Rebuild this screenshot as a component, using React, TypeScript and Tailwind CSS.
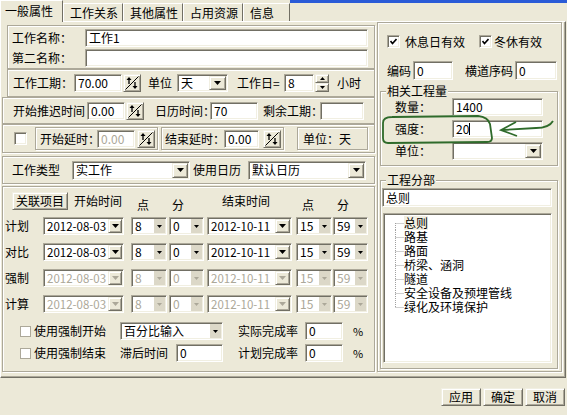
import React from "react";

const sunk =
  "border border-t-[#aca899] border-l-[#aca899] border-b-white border-r-white shadow-[inset_1px_1px_0_#716f64,inset_-1px_-1px_0_#f1efe2]";
const rais =
  "border border-t-[#f1efe2] border-l-[#f1efe2] border-b-[#716f64] border-r-[#716f64] shadow-[inset_1px_1px_0_#fff,inset_-1px_-1px_0_#aca899]";
const etch = "border border-[#aca899] shadow-[inset_1px_1px_0_#fff,1px_1px_0_#fff]";

function L({ cls = "", children }: { cls?: string; children: React.ReactNode }) {
  return <span className={`${cls} shrink-0 whitespace-nowrap leading-[14px]`}>{children}</span>;
}

function Edit({
  w,
  h = "h-[18px]",
  v = "",
  dis = false,
  caret = false,
}: {
  w: string;
  h?: string;
  v?: string;
  dis?: boolean;
  caret?: boolean;
}) {
  return (
    <div
      className={`${w} ${h} shrink-0 bg-white ${sunk} flex items-center pl-[3px] leading-[14px] whitespace-nowrap ${
        dis ? "text-[#aca899]" : ""
      }`}
    >
      {v}
      {caret && <span className="w-px h-[12px] bg-black" />}
    </div>
  );
}

function Tri({ dis = false, small = false }: { dis?: boolean; small?: boolean }) {
  const c = dis ? "#aca899" : "#000";
  return small ? (
    <svg width="5" height="3" viewBox="0 0 5 3">
      <polygon points="0,0 5,0 2.5,3" fill={c} />
    </svg>
  ) : (
    <svg width="7" height="4" viewBox="0 0 7 4">
      <polygon points="0,0 7,0 3.5,4" fill={c} />
    </svg>
  );
}

function Combo({
  w,
  v = "",
  dis = false,
  flat = false,
  h = "h-[18px]",
  bw = "w-[16px]",
  txt = "",
}: {
  w: string;
  v?: string;
  dis?: boolean;
  flat?: boolean;
  h?: string;
  bw?: string;
  txt?: string;
}) {
  return (
    <div className={`${w} ${h} shrink-0 bg-white ${sunk} flex p-px`}>
      <div
        className={`flex-1 min-w-0 flex items-center pl-[2px] leading-[14px] whitespace-nowrap ${txt} ${
          dis ? "text-[#aca899]" : ""
        }`}
      >
        {v}
      </div>
      {flat ? (
        <div className="w-[12px] shrink-0 bg-[#dcd8c8] border-l border-white flex items-center justify-center">
          <Tri small dis={dis} />
        </div>
      ) : (
        <div className={`${bw} shrink-0 ${rais} bg-[#ece9d8] flex items-center justify-center`}>
          <Tri dis={dis} />
        </div>
      )}
    </div>
  );
}

function Spin({ cls = "" }: { cls?: string }) {
  return (
    <div className={`${cls} w-[18px] h-[18px] shrink-0 ${rais} bg-[#ece9d8] flex items-center justify-center`}>
      <svg width="14" height="14" viewBox="0 0 14 14">
        <line x1="0.5" y1="13.5" x2="13.5" y2="0.5" stroke="#000" />
        <line x1="4" y1="3" x2="4" y2="8" stroke="#000" strokeWidth="1.3" />
        <polygon points="1.5,4 4,1 6.5,4" fill="#000" />
        <line x1="10" y1="6" x2="10" y2="11" stroke="#000" strokeWidth="1.3" />
        <polygon points="7.5,10 10,13 12.5,10" fill="#000" />
      </svg>
    </div>
  );
}

function UpDown({ cls = "" }: { cls?: string }) {
  return (
    <div className={`${cls} w-[14px] h-[18px] shrink-0 flex flex-col`}>
      <div className={`h-[9px] ${rais} bg-[#ece9d8] flex items-center justify-center`}>
        <svg width="5" height="3" viewBox="0 0 5 3">
          <polygon points="0,3 5,3 2.5,0" fill="#000" />
        </svg>
      </div>
      <div className={`h-[9px] ${rais} bg-[#ece9d8] flex items-center justify-center`}>
        <Tri small />
      </div>
    </div>
  );
}

function Check({ on = false, flat = false, cls = "" }: { on?: boolean; flat?: boolean; cls?: string }) {
  return (
    <div
      className={`${cls} ${flat ? "w-[11px] h-[11px] border border-[#aca899]" : `w-[13px] h-[13px] ${sunk}`} shrink-0 bg-white flex items-center justify-center`}
    >
      {on && (
        <svg width="7" height="7" viewBox="0 0 7 7">
          <polyline points="0.5,3 2.5,5.5 6.5,1" fill="none" stroke="#000" strokeWidth="1.6" />
        </svg>
      )}
    </div>
  );
}

function Btn({ cls, children }: { cls: string; children: React.ReactNode }) {
  return (
    <div className={`${cls} h-[18px] shrink-0 ${rais} bg-[#ece9d8] flex items-center justify-center leading-[14px]`}>
      {children}
    </div>
  );
}

function Group({ cls, title, children }: { cls: string; title: string; children: React.ReactNode }) {
  return (
    <div className={`${cls} ${etch} relative shrink-0 flex flex-col`}>
      <span className="absolute left-[5px] -top-[8px] px-px bg-[#ece9d8] leading-[14px]">{title}</span>
      {children}
    </div>
  );
}

const tree = ["总则", "路基", "路面", "桥梁、涵洞", "隧道", "安全设备及预埋管线", "绿化及环境保护"];

function DateRow({ label, dis = false }: { label: string; dis?: boolean }) {
  return (
    <div className="flex items-center h-[18px]">
      <L cls="ml-[2px] w-[24px]">{label}</L>
      <Combo w="ml-[14px] w-[81px]" v="2012-08-03" dis={dis} bw="w-[14px]" txt="text-[11.5px]" />
      <Combo w="ml-[7px] w-[36px]" v="8" dis={dis} flat />
      <Combo w="ml-[2px] w-[35px]" v="0" dis={dis} flat />
      <Combo w="ml-[3px] w-[85px]" v="2012-10-11" dis={dis} bw="w-[15px]" txt="text-[11.5px]" />
      <Combo w="ml-[4px] w-[36px]" v="15" dis={dis} flat />
      <Combo w="ml-[1px] w-[35px]" v="59" dis={dis} flat />
    </div>
  );
}

export default function App() {
  return (
    <div className="w-[567px] h-[415px] bg-[#ece9d8] overflow-hidden relative font-['Noto_Sans_CJK_SC',sans-serif] text-[12px] text-black leading-[14px]">
      {/* tabs */}
      <div className="flex h-[21px]">
        <div className="w-[63px] h-[22px] relative z-10 bg-[#ece9d8] border-t border-l border-r border-t-white border-l-white border-r-[#716f64] pl-[4px] pt-[3px]">
          一般属性
        </div>
        <div className="w-[60px] h-[18px] mt-[3px] border-t border-l border-r border-t-white border-l-white border-r-[#716f64] pl-[6px] pt-[2px]">
          工作关系
        </div>
        <div className="w-[60px] h-[18px] mt-[3px] border-t border-l border-r border-t-white border-l-white border-r-[#716f64] pl-[6px] pt-[2px]">
          其他属性
        </div>
        <div className="w-[60px] h-[18px] mt-[3px] border-t border-l border-r border-t-white border-l-white border-r-[#716f64] pl-[6px] pt-[2px]">
          占用资源
        </div>
        <div className="w-[47px] h-[18px] mt-[3px] border-t border-l border-r border-t-white border-l-white border-r-[#716f64] pl-[6px] pt-[2px]">
          信息
        </div>
        <div className="flex-1">
          <div className="h-[3px] bg-[#2a5bd7]" />
        </div>
      </div>

      {/* page */}
      <div className="w-[566px] h-[357px] border border-t-white border-l-white border-r-[#716f64] border-b-[#716f64] shadow-[inset_-1px_-1px_0_#aca899] flex pl-px">
        {/* left column */}
        <div className="w-[373px] mt-[3px] flex flex-col shrink-0">
          {/* A */}
          <div className={`ml-[5px] w-[368px] h-[44px] ${etch} flex flex-col pt-[3px] gap-[2px]`}>
            <div className="flex items-center h-[18px]">
              <L cls="ml-[4px] w-[73px]">工作名称：</L>
              <Edit w="w-[283px]" v="工作1" />
            </div>
            <div className="flex items-center h-[18px]">
              <L cls="ml-[4px] w-[73px]">第二名称：</L>
              <Edit w="w-[283px]" />
            </div>
          </div>
          {/* B */}
          <div className={`ml-[5px] w-[368px] h-[28px] ${etch} flex items-center`}>
            <L cls="ml-[5px] w-[61px]">工作工期：</L>
            <Edit w="w-[48px]" v="70.00" />
            <Spin cls="ml-[1px]" />
            <L cls="ml-[7px] w-[24px]">单位</L>
            <Combo w="ml-[5px] w-[51px]" v="天" bw="w-[17px]" />
            <L cls="ml-[9px] w-[46px]">工作日=</L>
            <Edit w="ml-[1px] w-[30px]" v="8" />
            <UpDown cls="ml-[1px]" />
            <L cls="ml-[8px]">小时</L>
          </div>
          {/* C */}
          <div className={`w-[373px] h-[27px] ${etch} flex items-center`}>
            <L cls="ml-[10px] w-[72px]">开始推迟时间</L>
            <Edit w="ml-[2px] w-[38px]" v="0.00" />
            <Spin cls="ml-[1px]" />
            <L cls="ml-[11px] w-[55px]">日历时间：</L>
            <Edit w="w-[48px]" v="70" />
            <L cls="ml-[5px] w-[57px]">剩余工期：</L>
            <Edit w="w-[44px]" />
          </div>
          {/* D */}
          <div className={`w-[373px] h-[29px] ${etch} flex items-center`}>
            <Check cls="ml-[11px]" />
            <div className={`ml-[8px] w-[123px] h-[23px] ${etch} flex items-center`}>
              <L cls="ml-[4px] w-[57px]">开始延时：</L>
              <Edit w="w-[38px]" v="0.00" dis />
              <Spin cls="ml-[2px]" />
            </div>
            <div className={`ml-[3px] w-[123px] h-[23px] ${etch} flex items-center`}>
              <L cls="ml-[3px] w-[59px]">结束延时：</L>
              <Edit w="w-[35px]" v="0.00" />
              <Spin cls="ml-[4px]" />
            </div>
            <div className={`ml-[13px] w-[71px] h-[23px] ${etch} flex items-center`}>
              <L cls="ml-[5px]">单位：天</L>
            </div>
          </div>
          {/* E */}
          <div className={`mt-[3px] w-[373px] h-[28px] ${etch} flex items-center`}>
            <L cls="ml-[9px] w-[48px]">工作类型</L>
            <Combo w="ml-[12px] w-[118px]" v="实工作" h="h-[19px]" />
            <L cls="ml-[3px] w-[48px]">使用日历</L>
            <Combo w="ml-[7px] w-[118px]" v="默认日历" h="h-[19px]" />
          </div>
          {/* F */}
          <div className={`mt-[2px] w-[373px] h-[186px] ${etch} flex flex-col`}>
            <div className="flex items-start mt-[5px] h-[18px]">
              <Btn cls="ml-[9px] w-[56px]">关联项目</Btn>
              <L cls="ml-[6px] w-[48px] mt-[2px]">开始时间</L>
              <L cls="ml-[15px] mt-[6px]">点</L>
              <L cls="ml-[23px] mt-[6px]">分</L>
              <L cls="ml-[38px] w-[48px] mt-[2px]">结束时间</L>
              <L cls="ml-[32px] mt-[6px]">点</L>
              <L cls="ml-[23px] mt-[6px]">分</L>
            </div>
            <div className="flex flex-col gap-[8px] mt-[7px]">
              <DateRow label="计划" />
              <DateRow label="对比" />
              <DateRow label="强制" dis />
              <DateRow label="计算" dis />
            </div>
            <div className="flex items-center h-[18px] mt-[9px]">
              <Check flat cls="ml-[17px]" />
              <L cls="ml-[3px] w-[72px]">使用强制开始</L>
              <Combo w="ml-[14px] w-[103px]" v="百分比输入" flat />
              <L cls="ml-[15px] w-[60px]">实际完成率</L>
              <Edit w="ml-[7px] w-[38px]" v="0" />
              <L cls="ml-[10px] text-[11px]">%</L>
            </div>
            <div className="flex items-center h-[18px] mt-[4px]">
              <Check flat cls="ml-[17px]" />
              <L cls="ml-[3px] w-[72px]">使用强制结束</L>
              <L cls="ml-[14px] w-[48px]">滞后时间</L>
              <Edit w="ml-[8px] w-[47px]" v="0" />
              <L cls="ml-[15px] w-[60px]">计划完成率</L>
              <Edit w="ml-[7px] w-[38px]" v="0" />
              <L cls="ml-[10px] text-[11px]">%</L>
            </div>
          </div>
        </div>

        {/* right column */}
        <div className={`ml-[2px] w-[185px] h-[350px] ${etch} flex flex-col shrink-0`}>
          <div className="flex items-center mt-[12px] h-[13px]">
            <Check on cls="ml-[9px]" />
            <L cls="ml-[5px] w-[60px]">休息日有效</L>
            <Check on cls="ml-[14px]" />
            <L cls="ml-[2px]">冬休有效</L>
          </div>
          <div className="flex items-center mt-[13px] h-[19px]">
            <L cls="ml-[9px] w-[24px]">编码</L>
            <Edit w="ml-[2px] w-[40px]" h="h-[19px]" v="0" />
            <L cls="ml-[12px] w-[48px]">横道序码</L>
            <Edit w="ml-[2px] w-[42px]" h="h-[19px]" v="0" />
          </div>
          <Group cls="ml-[2px] mt-[11px] w-[178px] h-[75px]" title="相关工程量">
            <div className="flex flex-col gap-[4px] mt-[6px]">
              <div className="flex items-center h-[18px]">
                <L cls="ml-[14px] w-[57px]">数量：</L>
                <Edit w="w-[91px]" v="1400" />
              </div>
              <div className="flex items-center h-[18px]">
                <L cls="ml-[14px] w-[57px]">强度：</L>
                <Edit w="w-[91px]" v="20" caret />
              </div>
              <div className="flex items-center h-[18px]">
                <L cls="ml-[14px] w-[57px]">单位：</L>
                <Combo w="w-[91px]" />
              </div>
            </div>
          </Group>
          <Group cls="ml-[2px] mt-[14px] w-[178px] h-[189px]" title="工程分部">
            <Edit w="ml-[1px] mt-[7px] w-[170px]" h="h-[19px]" v="总则" />
            <div className={`ml-[2px] mt-[6px] w-[169px] h-[150px] bg-white ${sunk} flex flex-col pt-[2px]`}>
              {tree.map((t, i) => (
                <div key={t} className="flex items-center h-[14px]">
                  <svg width="20" height="14" viewBox="0 0 20 14" className="shrink-0">
                    <line
                      x1="11.5"
                      x2="11.5"
                      y1={i === 0 ? 7 : 0}
                      y2={i === tree.length - 1 ? 7 : 14}
                      stroke="#a0a0a0"
                      strokeDasharray="1 1"
                    />
                    <line x1="11.5" x2="20" y1="7.5" y2="7.5" stroke="#a0a0a0" strokeDasharray="1 1" />
                  </svg>
                  <span className={`leading-[14px] whitespace-nowrap ${i === 0 ? "bg-[#f1efe2]" : ""}`}>{t}</span>
                </div>
              ))}
            </div>
          </Group>
        </div>
      </div>

      {/* buttons */}
      <div className="flex justify-end gap-[2px] pr-[2px] mt-[10px]">
        <Btn cls="w-[40px]">应用</Btn>
        <Btn cls="w-[40px]">确定</Btn>
        <Btn cls="w-[40px]">取消</Btn>
      </div>

      {/* hand-drawn annotation */}
      <svg className="absolute inset-0 pointer-events-none" width="567" height="415" viewBox="0 0 567 415">
        <path
          d="M 392 117 L 478 116 Q 488 117 490 124 L 492 138 Q 492 142 487 142 L 388 143 Q 383 143 383 138 L 383 123 Q 383 117 392 117"
          fill="none"
          stroke="#2f6b2b"
          strokeWidth="1.8"
        />
        <path d="M 553 121 Q 549 128 536 128 L 503 130" fill="none" stroke="#2f6b2b" strokeWidth="1.8" />
        <path d="M 516 122 L 501 130 L 517 136" fill="none" stroke="#2f6b2b" strokeWidth="1.8" />
      </svg>
    </div>
  );
}
